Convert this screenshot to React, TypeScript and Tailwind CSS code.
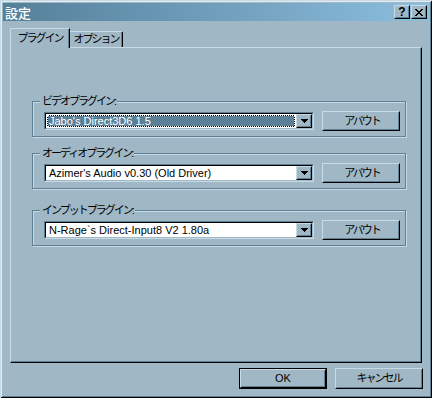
import React from 'react';

function Raised({ children, className = '' }: { children?: React.ReactNode; className?: string }) {
  return (
    <div
      className={`border border-t-[#c8dae4] border-l-[#c8dae4] border-r-black border-b-black ${className}`}
    >
      <div className="w-full h-full border border-t-[#a0b8c6] border-l-[#a0b8c6] border-r-[#5e8094] border-b-[#5e8094] bg-[#a0b8c6] flex items-center justify-center">
        {children}
      </div>
    </div>
  );
}

function DropArrow() {
  return (
    <svg width="7" height="4" viewBox="0 0 7 4" shapeRendering="crispEdges">
      <rect x="0" y="0" width="7" height="1" fill="#000" />
      <rect x="1" y="1" width="5" height="1" fill="#000" />
      <rect x="2" y="2" width="3" height="1" fill="#000" />
      <rect x="3" y="3" width="1" height="1" fill="#000" />
    </svg>
  );
}

function Combo({ text, focused }: { text: string; focused?: boolean }) {
  return (
    <div className="w-[270px] h-[18px] border border-t-[#5e8094] border-l-[#5e8094] border-r-[#c8dae4] border-b-[#c8dae4]">
      <div className="w-full h-full border border-t-black border-l-black border-r-[#a0b8c6] border-b-[#a0b8c6] bg-white flex">
        <div className="flex-1 min-w-0 p-px flex">
          {focused ? (
            <div className="flex-1 bg-black flex">
              <div className="flex-1 bg-[#5a7f96] bg-clip-padding border border-dotted border-white flex items-center pl-[1px] text-white whitespace-nowrap">
                {text}
              </div>
            </div>
          ) : (
            <div className="flex-1 flex items-center pl-[2px] text-black whitespace-nowrap">{text}</div>
          )}
        </div>
        <Raised className="w-[16px] h-full">
          <DropArrow />
        </Raised>
      </div>
    </div>
  );
}

function Group({ title, value, focused, className = '' }: { title: string; value: string; focused?: boolean; className?: string }) {
  return (
    <div
      className={`relative w-[374px] border border-[#5e8094] shadow-[inset_1px_1px_0_#c8dae4,1px_1px_0_#c8dae4] pt-[9px] pb-[5px] pl-[11px] pr-[5px] ${className}`}
    >
      <span className="absolute left-[7px] -top-[7px] px-[2px] bg-[#a0b8c6] leading-[13px] text-black tracking-[-2px] whitespace-nowrap">{title}</span>
      <div className="flex items-center gap-[8px]">
        <Combo text={value} focused={focused} />
        <Raised className="w-[78px] h-[20px]">
          <span className="text-black tracking-[-2px] pl-[2px]">アバウト</span>
        </Raised>
      </div>
    </div>
  );
}

export default function App() {
  return (
    <div
      className="w-[432px] h-[398px] bg-[#a0b8c6] font-['Liberation_Sans','Noto_Sans_CJK_JP',sans-serif] text-[11px] leading-none shadow-[inset_1px_1px_0_#c8dae4,inset_-1px_-1px_0_#000,inset_2px_2px_0_#e2ecf1,inset_-2px_-2px_0_#5e8094] p-[3px] flex flex-col"
    >
      {/* caption */}
      <div className="h-[18px] bg-linear-to-r from-[#55809a] to-[#8cbede] flex items-center pl-[2px] pr-[2px]">
        <span className="text-white text-[13px] font-medium font-['Noto_Sans_CJK_JP',sans-serif] leading-none">設定</span>
        <div className="flex-1" />
        <div className="flex gap-[1px]">
          <Raised className="w-[16px] h-[14px]">
            <span className="font-['Liberation_Sans',sans-serif] font-bold text-[12px] leading-none text-black">?</span>
          </Raised>
          <Raised className="w-[16px] h-[14px]">
            <svg width="8" height="7" viewBox="0 0 8 7" shapeRendering="crispEdges">
              <path fill="#000" d="M0 0h2v1h-2zM6 0h2v1h-2zM1 1h2v1h-2zM5 1h2v1h-2zM2 2h4v1h-4zM3 3h2v1h-2zM2 4h4v1h-4zM1 5h2v1h-2zM5 5h2v1h-2zM0 6h2v1h-2zM6 6h2v1h-2z" />
            </svg>
          </Raised>
        </div>
      </div>

      {/* client */}
      <div className="flex-1 flex flex-col px-[7px] pt-[7px]">
        {/* tabs */}
        <div className="relative z-10 flex items-end h-[20px] -mb-px">
          <div className="w-[60px] h-[20px] bg-[#a0b8c6] border-t border-l border-t-[#c8dae4] border-l-[#c8dae4] rounded-tl-[2px] border-r border-r-black shadow-[inset_-1px_0_0_#5e8094] flex items-start justify-center pt-[4px]">
            <span className="text-black tracking-[-2px] whitespace-nowrap">プラグイン</span>
          </div>
          <div className="w-[53px] h-[16px] mb-px bg-[#a0b8c6] border-t border-t-[#c8dae4] border-r border-r-black shadow-[inset_-1px_0_0_#5e8094] rounded-tr-[2px] flex items-start justify-center pt-[2px]">
            <span className="text-black tracking-[-2px] whitespace-nowrap">オプション</span>
          </div>
        </div>
        {/* panel */}
        <div className="h-[316px] border border-t-[#c8dae4] border-l-[#c8dae4] border-r-black border-b-black shadow-[inset_-1px_-1px_0_#5e8094] pl-[21px] pt-[53px] flex flex-col">
          <Group title="ビデオプラグイン:" value="Jabo's Direct3D6 1.5" focused />
          <Group title="オーディオプラグイン:" value="Azimer's Audio v0.30 (Old Driver)" className="mt-[16px]" />
          <Group title="インプットプラグイン:" value="N-Rage`s Direct-Input8 V2 1.80a" className="mt-[21px]" />
        </div>
        {/* bottom buttons */}
        <div className="flex justify-end gap-[8px] mt-[5px] -mr-px">
          <div className="border border-black">
            <Raised className="w-[86px] h-[19px]">
              <span className="text-black">OK</span>
            </Raised>
          </div>
          <Raised className="w-[88px] h-[21px]">
            <span className="text-black tracking-[-2px]">キャンセル</span>
          </Raised>
        </div>
      </div>
    </div>
  );
}
